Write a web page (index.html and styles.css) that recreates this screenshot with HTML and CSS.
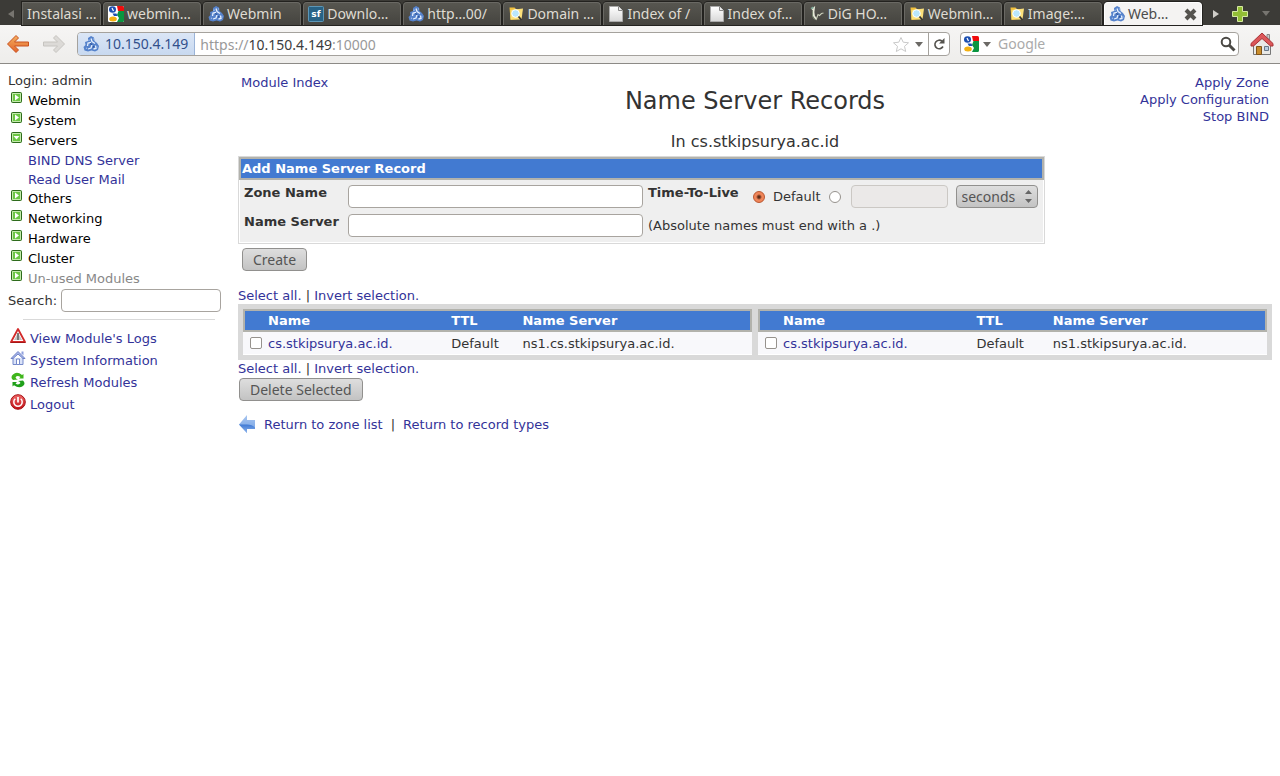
FILE: index.html
```html
<!DOCTYPE html>
<html lang="en">
<head>
    <meta charset="UTF-8">
    <meta name="viewport" content="width=device-width, initial-scale=1.0">
    <title>Webmin - Name Server Records</title>
    <link rel="stylesheet" href="styles.css">
</head>
<body>
    <!-- Shared icons -->
    <svg class="sprite" aria-hidden="true">
        <defs>
            <linearGradient id="g-orange" x1="0" y1="0" x2="0" y2="1">
                <stop offset="0" stop-color="#f4b060"/><stop offset="1" stop-color="#e2632a"/>
            </linearGradient>
            <linearGradient id="g-page" x1="0" y1="0" x2="0" y2="1">
                <stop offset="0" stop-color="#fff"/><stop offset="1" stop-color="#d8d8d8"/>
            </linearGradient>
            <linearGradient id="g-red" x1="0" y1="0" x2="0" y2="1">
                <stop offset="0" stop-color="#f06a6a"/><stop offset="1" stop-color="#c00f14"/>
            </linearGradient>
            <linearGradient id="g-back" x1="0" y1="0" x2="0" y2="1">
                <stop offset="0" stop-color="#a9c6f0"/><stop offset="1" stop-color="#6f9fe4"/>
            </linearGradient>
            <linearGradient id="g-back-low" x1="0" y1="0" x2="0" y2="1">
                <stop offset="0" stop-color="#3f79d4"/><stop offset="1" stop-color="#8db4ec"/>
            </linearGradient>
            <symbol id="i-webmin" viewBox="0 0 16 16">
                <path d="M5 2l3-2 3 1.500.5 3.500L14 7l2 3-1 4-3 1.500-3.500-1L5 15.500 1.500 14.500.5 11l2-2L2 6l3-1z" fill="#5582cb"/>
                <path d="M8 2.500l1 3 3 2M8 6.500l-3 .5-.5 3M12.500 9.500l.5 3-2.500.5M9 9l-1 3-3 1" stroke="#e4eefc" stroke-width="1.300" fill="none"/>
                <path d="M6 3.500v1.500M3 12l1 .5M10.500 2.500v1M14 10.500v1" stroke="#a9c4ee" stroke-width="1.200" fill="none"/>
                <path d="M7 7.500l2 1M11 10l-1 1.500" stroke="#2d5299" stroke-width="1.300"/>
            </symbol>
            <symbol id="i-google" viewBox="0 0 16 16">
                <rect width="16" height="16" rx="1.500" fill="#fff"/>
                <path d="M9 0h5.500A1.500 1.500 0 0 1 16 1.500V5h-6z" fill="#f00c0c"/>
                <path d="M10.500 5H16v9.500a1.500 1.500 0 0 1-1.500 1.500H9l2-4-2-3z" fill="#0a9540"/>
                <ellipse cx="4.500" cy="3.500" rx="3.500" ry="3.300" fill="#1c4fb0"/>
                <path d="M4 2l1.500 3" stroke="#fff" stroke-width="1.300"/>
                <path d="M4.500 7.500h4L9.500 10H6z" fill="#1c4fb0"/>
                <ellipse cx="5" cy="13" rx="3.800" ry="2.500" fill="#f3b011"/>
            </symbol>
            <symbol id="i-sf" viewBox="0 0 16 16">
                <rect x=".5" y=".5" width="15" height="15" rx="1" fill="#286285" stroke="#5c96b6"/>
                <text x="8" y="11" text-anchor="middle" class="sf-text">sf</text>
            </symbol>
            <symbol id="i-folder" viewBox="0 0 16 16">
                <path d="M1.500 1.500h5L8 3h4.500v10l-10 1z" fill="#f2c13d"/>
                <path d="M2.500 4L15 2.500l-1.500 11h-11z" fill="#fbe07a"/>
                <circle cx="7.500" cy="7.500" r="3.800" fill="#b9e6fb" stroke="#fff"/>
                <path d="M10.500 10.500l3 3.500" stroke="#333" stroke-width="1.800"/>
            </symbol>
            <symbol id="i-page" viewBox="0 0 16 16">
                <path d="M1.500.5h9l4 4v11h-13z" fill="url(#g-page)" stroke="#aaa"/>
                <path d="M10.500.5v4h4" fill="#eee" stroke="#888"/>
            </symbol>
            <symbol id="i-dig" viewBox="0 0 16 16">
                <path d="M3 3.500L5 2l-.5 4 .5 4 2 3" fill="none" stroke="#e7e9d8" stroke-width="1.800"/>
                <path d="M7 14l2-5.500 1.500 1 2-2 2-.5" fill="none" stroke="#c9cdb9" stroke-width="1.100"/>
                <path d="M1.500 2l2.500-1.500L5 2 2.500 3.500z" fill="#7fa796"/>
                <path d="M3.500 5.500v5l2 3" fill="none" stroke="#7b8872"/>
            </symbol>
            <symbol id="i-open" viewBox="0 0 11 11">
                <rect x=".5" y=".5" width="10" height="10" rx="1" fill="#6cc644" stroke="#2e6b1c"/>
                <path d="M1.500 9.500v-8h8v8z" fill="none" stroke="#c4eaad"/>
                <path d="M4 2.500v6l4-3z" fill="#fff"/>
            </symbol>
            <symbol id="i-closed" viewBox="0 0 11 11">
                <rect x=".5" y=".5" width="10" height="10" rx="1" fill="#6cc644" stroke="#2e6b1c"/>
                <path d="M1.500 9.500v-8h8v8z" fill="none" stroke="#c4eaad"/>
                <path d="M2.500 4h6l-3 3.500z" fill="#fff"/>
            </symbol>
        </defs>
    </svg>

    <!-- Browser window -->
    <header class="browser">
        <div class="tab-strip">
            <button class="strip-button scroll-left" aria-label="Scroll tabs left">
                <svg width="6" height="8" viewBox="0 0 6 8"><path d="M6 0v8L0 4z" fill="#777570"/></svg>
            </button>
            <button class="tab tab-cut">Instalasi …</button>
            <button class="tab"><svg class="favicon"><use href="#i-google"/></svg>webmin…</button>
            <button class="tab"><svg class="favicon"><use href="#i-webmin"/></svg>Webmin</button>
            <button class="tab"><svg class="favicon"><use href="#i-sf"/></svg>Downlo…</button>
            <button class="tab"><svg class="favicon"><use href="#i-webmin"/></svg>http…00/</button>
            <button class="tab"><svg class="favicon"><use href="#i-folder"/></svg>Domain …</button>
            <button class="tab"><svg class="favicon"><use href="#i-page"/></svg>Index of /</button>
            <button class="tab"><svg class="favicon"><use href="#i-page"/></svg>Index of…</button>
            <button class="tab"><svg class="favicon"><use href="#i-dig"/></svg>DiG HO…</button>
            <button class="tab"><svg class="favicon"><use href="#i-folder"/></svg>Webmin…</button>
            <button class="tab"><svg class="favicon"><use href="#i-folder"/></svg>Image:…</button>
            <button class="tab tab-active">
                <svg class="favicon"><use href="#i-webmin"/></svg>Web…
                <svg class="tab-close" width="13" height="13" viewBox="0 0 13 13"><path d="M2 2l9 9M11 2l-9 9" stroke="#55534f" stroke-width="4"/></svg>
            </button>
            <button class="strip-button" aria-label="Scroll tabs right">
                <svg width="6" height="8" viewBox="0 0 6 8"><path d="M0 0v8l6-4z" fill="#cfcdc8"/></svg>
            </button>
            <button class="strip-button" aria-label="New tab">
                <svg width="16" height="16" viewBox="0 0 16 16"><path d="M5.500.5h5v5h5v5h-5v5h-5v-5h-5v-5h5z" fill="#93be35" stroke="#d5e9a0"/></svg>
            </button>
            <button class="strip-button list-tabs" aria-label="List all tabs">
                <svg width="8" height="5" viewBox="0 0 8 5"><path d="M0 0h8L4 5z" fill="#777570"/></svg>
            </button>
        </div>

        <div class="toolbar">
            <button class="tool" aria-label="Back">
                <svg width="24" height="20" viewBox="0 0 24 20"><path d="M10 1.500L1.500 10l8.500 8.500 2.500-2.500-4-4H22.500V8H8.500l4-4z" fill="url(#g-orange)" stroke="#c9511f" stroke-linejoin="round"/></svg>
            </button>
            <button class="tool forward" aria-label="Forward">
                <svg width="24" height="20" viewBox="0 0 24 20"><path d="M14 1.500l8.500 8.500-8.500 8.500-2.500-2.500 4-4H1.500V8h14l-4-4z" fill="#dcdad7" stroke="#c6c4c0" stroke-linejoin="round"/></svg>
            </button>
            <div class="url-bar">
                <button class="identity"><svg class="favicon"><use href="#i-webmin"/></svg>10.150.4.149</button>
                <div class="url" role="textbox" contenteditable="true" spellcheck="false" aria-label="Address">https://<span class="host">10.150.4.149</span>:10000</div>
                <button class="bar-button" aria-label="Bookmark this page">
                    <svg width="18" height="17" viewBox="0 0 18 17"><path d="M9 1.500l2.200 4.700 5.300.6-4 3.500 1.200 5.200L9 12.800l-4.700 2.700 1.200-5.200-4-3.500 5.300-.6z" fill="#fff" stroke="#c9c9c9"/></svg>
                </button>
                <button class="bar-button history" aria-label="Show history">
                    <svg width="8" height="5" viewBox="0 0 8 5"><path d="M0 0h8L4 5z" fill="#6b6965"/></svg>
                </button>
                <button class="bar-button reload" aria-label="Reload">
                    <svg width="12" height="12" viewBox="0 0 12 12"><path d="M9 3.200A4.300 4.300 0 1 0 10 8.500" fill="none" stroke="#55534e" stroke-width="1.600"/><path d="M11.500 0v5.500H6z" fill="#55534e"/></svg>
                </button>
            </div>
            <div class="search-bar">
                <button class="bar-button" aria-label="Search engine">
                    <svg class="favicon"><use href="#i-google"/></svg>
                    <svg width="8" height="5" viewBox="0 0 8 5"><path d="M0 0h8L4 5z" fill="#6b6965"/></svg>
                </button>
                <input class="search-input" type="text" placeholder="Google" aria-label="Web search">
                <button class="bar-button" aria-label="Search">
                    <svg width="16" height="16" viewBox="0 0 16 16"><circle cx="6" cy="6" r="4.300" fill="none" stroke="#4b4945" stroke-width="2"/><path d="M9 9l5.500 5.500" stroke="#4b4945" stroke-width="3"/></svg>
                </button>
            </div>
            <button class="tool home" aria-label="Home">
                <svg width="24" height="24" viewBox="0 0 24 24">
                    <path d="M3.500 12L12 4l8.500 8v10.500h-17z" fill="#e9e9e6" stroke="#777"/>
                    <path d="M17 2.500h2.500V8L17 5.500z" fill="#ccc" stroke="#888"/>
                    <path d="M12 1L1 11.500V14h2.500L12 6.500l8.500 7.500H23v-2.500z" fill="#dc5759" stroke="#a83236"/>
                    <path d="M6.500 14.500h5v8h-5z" fill="#c98d2c" stroke="#80551a"/>
                    <path d="M14.500 14.500h4v4h-4z" fill="#b9cde0" stroke="#68788a"/>
                </svg>
            </button>
        </div>
    </header>

    <div class="page">
        <!-- Left menu -->
        <nav class="sidebar">
            <div class="login">Login: admin</div>
            <ul class="menu">
                <li><a class="category" href="#"><svg class="toggle"><use href="#i-open"/></svg>Webmin</a></li>
                <li><a class="category" href="#"><svg class="toggle"><use href="#i-open"/></svg>System</a></li>
                <li>
                    <a class="category" href="#"><svg class="toggle"><use href="#i-closed"/></svg>Servers</a>
                    <ul class="submenu">
                        <li><a href="#">BIND DNS Server</a></li>
                        <li><a href="#">Read User Mail</a></li>
                    </ul>
                </li>
                <li><a class="category" href="#"><svg class="toggle"><use href="#i-open"/></svg>Others</a></li>
                <li><a class="category" href="#"><svg class="toggle"><use href="#i-open"/></svg>Networking</a></li>
                <li><a class="category" href="#"><svg class="toggle"><use href="#i-open"/></svg>Hardware</a></li>
                <li><a class="category" href="#"><svg class="toggle"><use href="#i-open"/></svg>Cluster</a></li>
                <li><a class="category unused" href="#"><svg class="toggle"><use href="#i-open"/></svg>Un-used Modules</a></li>
            </ul>
            <div class="search">
                <label for="module-search">Search:</label>
                <input class="field" id="module-search" type="text">
            </div>
            <hr class="divider">
            <ul class="links">
                <li><a href="#">
                    <svg class="link-icon" viewBox="0 0 16 16"><path d="M8 1L15 14H1z" fill="#fff" stroke="#d22a2a" stroke-width="1.800" stroke-linejoin="round"/><path d="M8 4.500l4 7.500H4z" fill="#c4c4c4"/><path d="M8 5v7" stroke="#666" stroke-width="1.600"/><path d="M.5 14.500h15" stroke="#a51616"/></svg>
                    View Module's Logs</a></li>
                <li><a href="#">
                    <svg class="link-icon" viewBox="0 0 16 16"><path d="M3 8v6.500h10V8" fill="#dbe3f8" stroke="#7589cb"/><path d="M8 1.500L1 8.500h2L8 4l5 4.500h2z" fill="#a9b8ea" stroke="#6f82c8"/><path d="M11.500 1.500h2v4l-2-2z" fill="#8fa0dd"/><path d="M6.500 9h3v5.500h-3z" fill="#fff" stroke="#7589cb"/></svg>
                    System Information</a></li>
                <li><a href="#">
                    <svg class="link-icon" viewBox="0 0 16 16"><path d="M13.500 2v4.500H9L10.500 5Q7 3 5.500 5.500 6 7 8 7.500L3 8Q0 5 3 2.500 7-1 12 3z" fill="#3fb51c"/><path d="M2.500 14.500V10H7l-1.500 1.500Q8.500 13.500 10.500 11 10 9.500 8 9l5-.5q3 3 0 5.500-4 3-9-.7z" fill="#1fa01a"/></svg>
                    Refresh Modules</a></li>
                <li><a href="#">
                    <svg class="link-icon" viewBox="0 0 16 16"><circle cx="8" cy="8" r="7.300" fill="url(#g-red)" stroke="#a80f12"/><path d="M5.300 4.800a4.200 4.200 0 1 0 5.400 0" fill="none" stroke="#fff" stroke-width="1.500"/><path d="M8 3v5.500" stroke="#fff" stroke-width="1.700"/></svg>
                    Logout</a></li>
            </ul>
        </nav>

        <main class="content">
            <div class="heading">
                <a href="#">Module Index</a>
                <div class="title">
                    <h1>Name Server Records</h1>
                    <p>In cs.stkipsurya.ac.id</p>
                </div>
                <div class="actions">
                    <a href="#">Apply Zone</a>
                    <a href="#">Apply Configuration</a>
                    <a href="#">Stop BIND</a>
                </div>
            </div>

            <form class="record-form">
                <div class="panel">
                    <h2 class="panel-title">Add Name Server Record</h2>
                    <div class="panel-body">
                        <label class="name" for="zone-name">Zone Name</label>
                        <input class="field" id="zone-name" type="text">
                        <span class="name">Time-To-Live</span>
                        <div class="ttl">
                            <input class="radio" type="radio" name="ttl" id="ttl-default" checked>
                            <label for="ttl-default">Default</label>
                            <input class="radio" type="radio" name="ttl" aria-label="Custom time to live">
                            <input class="field ttl-value" type="text" disabled aria-label="Time to live">
                            <select class="unit" aria-label="Unit">
                                <option>seconds</option>
                                <option>minutes</option>
                                <option>hours</option>
                                <option>days</option>
                            </select>
                        </div>
                        <label class="name" for="name-server">Name Server</label>
                        <input class="field" id="name-server" type="text">
                        <span class="note">(Absolute names must end with a .)</span>
                    </div>
                </div>
                <button class="button create" type="button">Create</button>
            </form>

            <form class="records">
                <div class="select-links"><a href="#">Select all.</a> | <a href="#">Invert selection.</a></div>
                <div class="tables">
                    <table class="list">
                        <thead>
                            <tr><th class="check"></th><th class="record">Name</th><th class="time">TTL</th><th>Name Server</th></tr>
                        </thead>
                        <tbody>
                            <tr>
                                <td class="check"><input class="box" type="checkbox" aria-label="Select first record"></td>
                                <td><a href="#">cs.stkipsurya.ac.id.</a></td>
                                <td>Default</td>
                                <td>ns1.cs.stkipsurya.ac.id.</td>
                            </tr>
                        </tbody>
                    </table>
                    <table class="list list-wide">
                        <thead>
                            <tr><th class="check"></th><th class="record">Name</th><th class="time">TTL</th><th>Name Server</th></tr>
                        </thead>
                        <tbody>
                            <tr>
                                <td class="check"><input class="box" type="checkbox" aria-label="Select second record"></td>
                                <td><a href="#">cs.stkipsurya.ac.id.</a></td>
                                <td>Default</td>
                                <td>ns1.stkipsurya.ac.id.</td>
                            </tr>
                        </tbody>
                    </table>
                </div>
                <div class="select-links"><a href="#">Select all.</a> | <a href="#">Invert selection.</a></div>
                <button class="button delete" type="button">Delete Selected</button>
            </form>

            <div class="return">
                <svg width="18" height="18" viewBox="0 0 18 18"><path d="M9 0v5h8v9H9v4L1 9.500z" fill="url(#g-back)"/><path d="M1 9.500h8q5 0 8 3V14H9v4z" fill="url(#g-back-low)"/></svg>
                <a href="#">Return to zone list</a>
                <span>|</span>
                <a href="#">Return to record types</a>
            </div>
        </main>
    </div>
</body>
</html>
```
FILE: styles.css
```css
* {
    box-sizing: border-box;
}

body {
    margin: 0;
    background: #fff;
    color: #333;
    font-family: "DejaVu Sans", sans-serif;
    font-size: 13px;
    line-height: 17px;
}

a {
    color: #333399;
    text-decoration: none;
}

ul {
    margin: 0;
    padding: 0;
    list-style: none;
}

button {
    padding: 0;
    border: 0;
    background: none;
    font: inherit;
    color: inherit;
}

.sprite {
    position: absolute;
    width: 0;
    height: 0;
}

.sf-text {
    font: bold 9px "DejaVu Sans", sans-serif;
    fill: #fff;
}

/* Browser window */
.browser {
    font-family: "Noto Sans", sans-serif;
    font-size: 14px;
    line-height: 20px;
}

.tab-strip {
    display: flex;
    height: 25px;
    padding-top: 2px;
    background: #3c3b37;
}

.strip-button {
    display: flex;
    align-items: center;
    justify-content: center;
    width: 24px;
}

.scroll-left {
    width: 22px;
}

.list-tabs {
    width: 28px;
}

.tab {
    display: flex;
    flex: 1;
    align-items: center;
    gap: 3px;
    min-width: 0;
    margin-right: 2px;
    padding: 0 4px;
    overflow: hidden;
    border: 1px solid #6a6964;
    border-bottom: 0;
    border-radius: 4px 4px 0 0;
    background: linear-gradient(#575650, #45443f);
    box-shadow: 0 0 0 1px #23221f;
    color: #dfdbd2;
    white-space: nowrap;
}

.tab-cut {
    flex: 0 0 79px;
    border-radius: 0 4px 0 0;
}

.tab-active {
    border-color: #fff;
    background: #f4f3f2;
    color: #4c4c4c;
}

.tab-close {
    margin-left: auto;
}

.favicon {
    flex: none;
    width: 16px;
    height: 16px;
}

.toolbar {
    display: flex;
    align-items: center;
    height: 39px;
    padding: 0 6px;
    border-bottom: 1px solid #8c8a86;
    background: linear-gradient(#f6f5f4, #eeedeb);
}

.tool {
    display: flex;
}

.forward {
    margin: 0 11px 0 12px;
}

.home {
    margin-left: 11px;
}

.url-bar,
.search-bar {
    display: flex;
    height: 24px;
    overflow: hidden;
    border: 1px solid #a5a29d;
    border-radius: 4px;
    background: #fff;
}

.url-bar {
    flex: 1;
    min-width: 0;
    margin-right: 10px;
}

.identity {
    display: flex;
    align-items: center;
    gap: 6px;
    padding: 0 6px 0 5px;
    border-right: 1px solid #9bb4d8;
    background: linear-gradient(#dbe6f6, #c8d9f0);
    color: #32508c;
}

.url {
    flex: 1;
    min-width: 0;
    padding: 2px 5px;
    color: #999;
    outline: none;
    white-space: nowrap;
}

.host {
    color: #3c3c3c;
}

.bar-button {
    display: flex;
    flex: none;
    align-items: center;
    justify-content: center;
    gap: 4px;
}

.history {
    width: 18px;
}

.reload {
    width: 21px;
    border-left: 1px solid #a5a29d;
}

.search-bar {
    flex: 0 0 279px;
    padding: 0 2px;
}

.search-input {
    flex: 1;
    min-width: 0;
    padding: 0 7px;
    border: 0;
    outline: none;
    background: none;
    font: inherit;
}

.search-input::placeholder {
    color: #aaa;
}

/* Page */
.page {
    display: flex;
}

.sidebar {
    flex: 0 0 230px;
    min-width: 0;
    padding: 7px 9px 0 8px;
}

.login,
.category {
    line-height: 20px;
}

.category {
    display: flex;
    gap: 6px;
    padding-left: 3px;
    color: #000;
}

.unused {
    color: #888;
}

.toggle {
    flex: none;
    width: 11px;
    height: 11px;
    margin-top: 1px;
}

.submenu {
    padding-left: 20px;
    line-height: 19px;
}

.field {
    height: 23px;
    min-width: 0;
    padding: 0 4px;
    border: 1px solid #a8a49f;
    border-radius: 4px;
    background: #fff;
    font: inherit;
}

.field:disabled {
    border-color: #cbc8c4;
    background: #ebe9e8;
}

.search {
    display: flex;
    align-items: center;
    gap: 4px;
    height: 23px;
}

.search .field {
    flex: 1;
}

.divider {
    margin: 7px 6px 8px 15px;
    border: 0;
    border-top: 1px solid #d9d9d9;
}

.links a {
    display: flex;
    gap: 4px;
    padding-left: 2px;
    line-height: 22px;
}

.link-icon {
    flex: none;
    width: 16px;
    height: 16px;
}

.content {
    flex: 1;
    min-width: 0;
    padding: 10px 8px 0;
}

.heading {
    display: grid;
    grid-template-columns: 1fr auto 1fr;
    padding: 0 3px;
}

.title {
    text-align: center;
}

.title h1 {
    margin: 13px 0 16px;
    font-size: 24px;
    font-weight: normal;
    line-height: 28px;
}

.title p {
    margin: 0 0 3px;
    font-size: 16px;
    line-height: 22px;
}

.actions {
    display: flex;
    flex-direction: column;
    align-items: flex-end;
}

.panel {
    width: 78%;
    border: 1px solid #d9d9d9;
}

.panel-title {
    margin: 0;
    padding: 0 1px;
    border: 2px solid #b2b2ac;
    background: #427ad1;
    color: #fff;
    font-size: 13px;
    line-height: 19px;
}

.panel-body {
    display: grid;
    grid-template-columns: 99px minmax(0, 295px) 99px auto;
    justify-content: start;
    gap: 6px 5px;
    padding: 5px 4px;
    border: 1px solid #fff;
    border-top: 0;
    background: #efefef;
}

.name {
    color: #333;
    font-weight: bold;
    line-height: 15px;
}

.ttl {
    display: flex;
    align-items: center;
    gap: 8px;
    padding-left: 1px;
}

.radio,
.box {
    flex: none;
    width: 12px;
    height: 12px;
    margin: 0;
    appearance: none;
    border: 1px solid #96928d;
    background: #fff;
}

.radio {
    border-radius: 50%;
}

.radio:checked {
    border-color: #b9562f;
    background: radial-gradient(circle, #5c2c18 1px, #f08559 3px);
}

.box {
    display: block;
    border-radius: 2px;
}

.ttl-value {
    width: 97px;
    margin-left: 2px;
}

.unit,
.button {
    height: 23px;
    border: 1px solid #91908e;
    border-radius: 4px;
    background: linear-gradient(#dedede, #c3c3c3);
    color: #555;
    font-family: "Noto Sans", sans-serif;
    font-size: 14px;
    line-height: 20px;
}

.unit {
    width: 82px;
    padding: 0 5px;
    appearance: none;
    background:
        url("data:image/svg+xml,%3Csvg xmlns='http://www.w3.org/2000/svg' width='7' height='13'%3E%3Cpath d='M0 4h7L3.500 0zM0 9h7l-3.500 4z' fill='%23666'/%3E%3C/svg%3E") right 5px center no-repeat,
        linear-gradient(#dedede, #c3c3c3);
}

.note {
    grid-column: span 2;
    align-self: center;
}

.button {
    display: block;
    padding: 0 10px;
}

.create {
    margin: 4px 0 0 4px;
}

.records {
    margin-top: 16px;
}

.tables {
    display: grid;
    grid-template-columns: 1fr 1fr;
    gap: 6px;
    padding: 5px;
    background: #d9d9d9;
}

.select-links {
    color: #333;
}

.list {
    width: 100%;
    table-layout: fixed;
    border-spacing: 0;
    background: #f8f8fb;
}

.list th {
    height: 23px;
    padding: 0;
    border: solid #b2b2ac;
    border-width: 2px 0;
    background: #427ad1;
    color: #fff;
    text-align: left;
}

.list th:first-child {
    border-left-width: 2px;
}

.list th:last-child {
    border-right-width: 2px;
}

.list td {
    height: 23px;
    padding: 0;
    border-bottom: 1px solid #fff;
}

.list .check {
    width: 25px;
}

.list td.check {
    padding-left: 7px;
}

.record {
    width: 36%;
}

.time {
    width: 14%;
}

.list-wide .record {
    width: 38%;
}

.list-wide .time {
    width: 15%;
}

.delete {
    margin: 1px 0 0 1px;
}

.return {
    display: flex;
    align-items: center;
    gap: 8px;
    margin-top: 14px;
}
```
